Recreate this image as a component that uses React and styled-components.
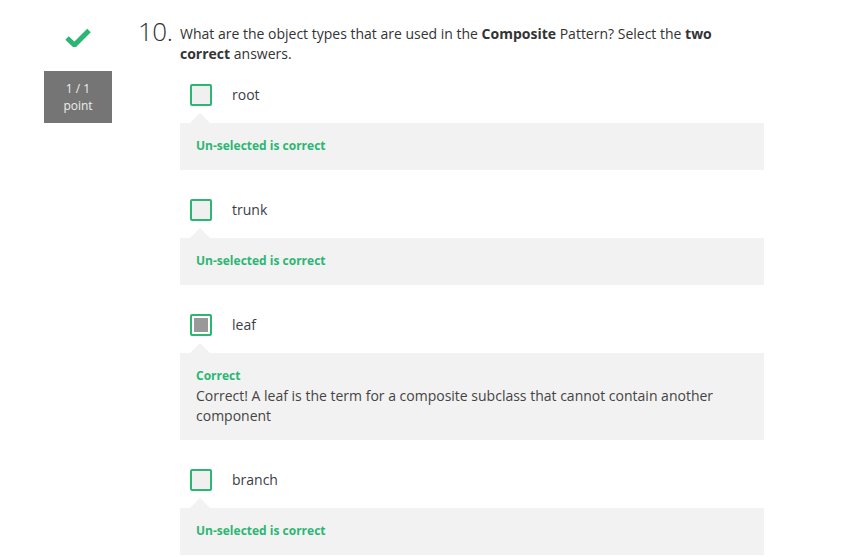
import React from "react";
import styled, { createGlobalStyle } from "styled-components";

const GREEN = "#2bb673";

const GlobalStyle = createGlobalStyle`
  html, body {
    margin: 0;
    padding: 0;
    background: #fff;
  }
  body {
    font-family: "Open Sans", "DejaVu Sans", sans-serif;
    color: #333;
  }
`;

const Page = styled.div`
  display: flex;
  align-items: flex-start;
  padding: 16px 0 0 44px;
`;

const Side = styled.div`
  width: 68px;
  display: flex;
  flex-direction: column;
  align-items: center;
  margin-right: 26px;
`;

const CheckMark = styled.svg`
  width: 26px;
  height: 19px;
  margin-top: 12px;
  margin-bottom: 24px;
`;

const Badge = styled.div`
  width: 68px;
  height: 52px;
  box-sizing: border-box;
  background: #757575;
  color: #eee;
  font-size: 12px;
  line-height: 17px;
  text-align: center;
  padding-top: 9px;
`;

const Number = styled.div`
  width: 42px;
  font-size: 26px;
  font-weight: 300;
  line-height: 30px;
  color: #333;
  letter-spacing: -0.5px;
`;

const Content = styled.div`
  width: 584px;
`;

const Question = styled.div`
  margin-top: 8px;
  font-size: 14px;
  line-height: 20px;
  color: #333;
  b {
    font-weight: 700;
  }
`;

const OptionList = styled.div`
  margin-top: 20px;
  display: flex;
  flex-direction: column;
  gap: 29px;
`;

const OptionRow = styled.div`
  display: flex;
  align-items: center;
  height: 22px;
  padding-left: 10px;
  margin-bottom: 17px;
`;

const Box = styled.div`
  width: 22px;
  height: 22px;
  box-sizing: border-box;
  border: 2px solid ${GREEN};
  border-radius: 2px;
  background: ${(p) => (p.checked ? "#fff" : "#f0f0f0")};
  padding: 2px;
  display: flex;
  margin-right: 20px;
  &::after {
    content: "";
    flex: 1;
    background: ${(p) => (p.checked ? "#999" : "transparent")};
  }
`;

const Label = styled.span`
  font-size: 14px;
  line-height: 20px;
  color: #3a3d45;
`;

const Feedback = styled.div`
  position: relative;
  background: #f2f2f2;
  padding: 14px 16px;
  &::before {
    content: "";
    position: absolute;
    top: -10px;
    left: 10px;
    border-left: 10px solid transparent;
    border-right: 10px solid transparent;
    border-bottom: 10px solid #f2f2f2;
  }
`;

const FeedbackTitle = styled.div`
  font-size: 12px;
  line-height: 17px;
  font-weight: 700;
  color: ${GREEN};
  margin-bottom: 2px;
`;

const FeedbackText = styled.div`
  font-size: 14px;
  line-height: 20px;
  color: #444;
`;

const options = [
  { label: "root", title: "Un-selected is correct" },
  { label: "trunk", title: "Un-selected is correct" },
  {
    label: "leaf",
    checked: true,
    title: "Correct",
    text: "Correct! A leaf is the term for a composite subclass that cannot contain another component",
  },
  { label: "branch", title: "Un-selected is correct" },
];

export default function App() {
  return (
    <>
      <GlobalStyle />
      <Page>
        <Side>
          <CheckMark viewBox="0 0 26 19">
            <path d="M2 10 L9.5 17 L24 2.5" fill="none" stroke={GREEN} strokeWidth="5" />
          </CheckMark>
          <Badge>
            1 / 1
            <br />
            point
          </Badge>
        </Side>
        <Number>10.</Number>
        <Content>
          <Question>
            What are the object types that are used in the <b>Composite</b> Pattern? Select the <b>two</b>{" "}
            <b>correct</b> answers.
          </Question>
          <OptionList>
            {options.map((o) => (
              <div key={o.label}>
                <OptionRow>
                  <Box checked={o.checked} />
                  <Label>{o.label}</Label>
                </OptionRow>
                <Feedback>
                  <FeedbackTitle>{o.title}</FeedbackTitle>
                  {o.text && <FeedbackText>{o.text}</FeedbackText>}
                </Feedback>
              </div>
            ))}
          </OptionList>
        </Content>
      </Page>
    </>
  );
}
